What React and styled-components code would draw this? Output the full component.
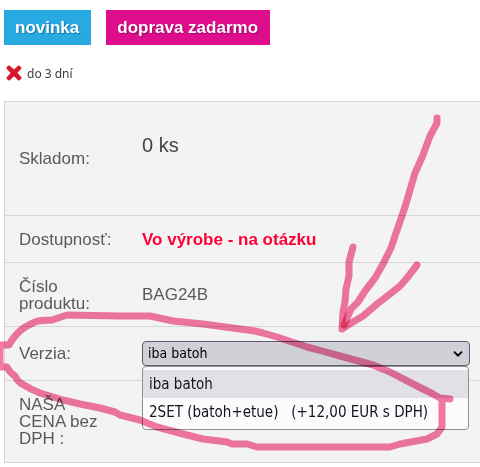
import React, { useState } from "react";
import styled, { createGlobalStyle } from "styled-components";

const versions = ["iba batoh", "2SET (batoh+etue)\u00a0\u00a0 (+12,00 EUR s DPH)"];

export default function App() {
  const [version, setVersion] = useState(versions[0]);
  return (
    <Page>
      <GlobalStyle />
      <Badges>
        <Badge color="#28a9e2">novinka</Badge>
        <Badge color="#de0d8b">doprava zadarmo</Badge>
      </Badges>
      <Delivery>
        <CrossIcon />
        do 3 dní
      </Delivery>
      <Table>
        <tbody>
          <tr>
            <Label height="114px">Skladom:</Label>
            <Value>
              <Stock>0 ks</Stock>
            </Value>
          </tr>
          <tr>
            <Label height="47px">Dostupnosť:</Label>
            <Value>
              <Availability>Vo výrobe - na otázku</Availability>
            </Value>
          </tr>
          <tr>
            <Label height="64px">Číslo produktu:</Label>
            <Value>BAG24B</Value>
          </tr>
          <tr>
            <Label height="54px">
              <label htmlFor="version">Verzia:</label>
            </Label>
            <Value>
              <SelectBox>
                <Select
                  id="version"
                  value={version}
                  onChange={(e) => setVersion(e.target.value)}
                >
                  {versions.map((v) => (
                    <option key={v}>{v}</option>
                  ))}
                </Select>
                <Chevron viewBox="0 0 10 6" aria-hidden="true">
                  <path d="M1 .7l4 4 4-4" />
                </Chevron>
                <Options role="listbox" aria-label="Verzia">
                  {versions.map((v) => (
                    <Option
                      key={v}
                      role="option"
                      aria-selected={v === version}
                      onClick={() => setVersion(v)}
                    >
                      {v}
                    </Option>
                  ))}
                </Options>
              </SelectBox>
            </Value>
          </tr>
          <tr>
            <Label height="82px">NAŠA CENA bez DPH :</Label>
            <Value />
          </tr>
        </tbody>
      </Table>
      <Marker />
    </Page>
  );
}

const CrossIcon = () => (
  <Cross viewBox="0 0 16 16" aria-hidden="true">
    <path d="M3.2 .3L8 4.6 12.6 .3Q14.5 .8 15.7 3.2L11.4 7.8 15.8 12.8Q14.8 15 12.6 15.7L8 11.3 3.4 15.7Q1 15 .3 12.8L4.6 7.9 .2 3.3Q1 1 3.2 .3Z" />
  </Cross>
);

// hand drawn arrow and loop around the version row
const Marker = () => (
  <MarkerSvg width="480" height="467" viewBox="0 0 480 467" aria-hidden="true">
    <path d="M437 118L437 123 430 136 423 155 415 173 410 190 405 207 395 236 391 248 383 264 375 278 365 291 358 302 351 309 344 325" />
    <path d="M353 247L349 262 349 276 346 289 345 302 343 312 342 329 348 325 363 316 377 304 390 294 400 286 407 278 417 265" />
    <path d="M450 399L440 398 433 394 417 386 390 372 373 365 340 356 322 351 307 347 277 337 263 333 255 331 240 329 203 324 173 321 150 316 120 316 67 315 52 320 Q40 320 35 322 Q24 327 20 331 Q14 336 9 345L0 345 0 367 7 367Q10 373 15 376Q18 382 22 384Q30 389 40 393L63 400 80 404 100 408 115 412 120 415 140 420 157 427 187 435 203 439 227 442 232 444 247 444 257 447 390 447 400 444 427 439 437 434 442 427 442 402" />
  </MarkerSvg>
);

const GlobalStyle = createGlobalStyle`
  * {
    box-sizing: border-box;
  }
  body {
    margin: 0;
    background-color: #ffffff;
  }
`;
const Page = styled.main`
  position: relative;
  overflow: hidden;
  padding: 10px 0px 4px 4px;
  font-family: "Liberation Sans", Arial, sans-serif;
  font-size: 17px;
  line-height: 17px;
  color: #5a5a5a;
`;
const Badges = styled.div`
  display: flex;
  gap: 15px;
`;
const Badge = styled.span`
  padding: 9px 12px 9px 11px;
  font-weight: 700;
  color: #ffffff;
  text-shadow: 1px 1px 1px rgba(0, 0, 0, 0.3);
  background-color: ${(props) => props.color};
`;
const Delivery = styled.div`
  display: flex;
  align-items: center;
  gap: 5px;
  height: 56px;
  padding: 0px 0px 0px 2px;
  font-family: "Noto Sans", sans-serif;
  font-size: 12px;
  color: #3c3c3c;
`;
const Cross = styled.svg`
  width: 16px;
  height: 16px;
  fill: #d9152c;
`;
const Table = styled.table`
  width: 100%;
  border-collapse: separate;
  border-spacing: 0;
  border-top: 1px solid #d6d6d6;
  border-left: 1px solid #d6d6d6;
  background-color: #f3f3f3;
`;
const Label = styled.th.attrs({ scope: "row" })`
  width: 137px;
  height: ${(props) => props.height};
  padding: 0px 27px 0px 14px;
  border-bottom: 1px solid #d6d6d6;
  font-weight: 400;
  text-align: left;
`;
const Value = styled.td`
  padding: 0px 10px 0px 0px;
  border-bottom: 1px solid #d6d6d6;
`;
const Stock = styled.div`
  padding: 0px 0px 27px 0px;
  font-size: 20px;
  color: #444444;
`;
const Availability = styled.strong`
  color: #ff0033;
`;
const SelectBox = styled.div`
  position: relative;
  font-family: "DejaVu Sans Condensed", Tahoma, sans-serif;
  font-size: 14px;
`;
const Select = styled.select`
  display: block;
  appearance: none;
  width: 100%;
  height: 25px;
  padding: 0px 24px 0px 5px;
  border: 1px solid #5f5f70;
  border-radius: 4px;
  font: inherit;
  color: #000000;
  background-color: #d0d0d7;
`;
const Chevron = styled.svg`
  position: absolute;
  top: 10px;
  right: 7px;
  width: 10px;
  height: 6px;
  fill: none;
  stroke: #000000;
  stroke-width: 1.8;
  pointer-events: none;
`;
const Options = styled.ul`
  position: absolute;
  top: 100%;
  left: 0;
  right: 1px;
  margin: 0;
  padding: 3px 0px;
  border: 1px solid #8f8f98;
  border-radius: 4px;
  list-style: none;
  font-size: 15px;
  color: #15141a;
  background-color: #fbfbfe;
`;
const Option = styled.li`
  padding: 0px 6px;
  line-height: 28px;
  white-space: nowrap;
  background-color: ${(props) => (props["aria-selected"] ? "#e0e0e6" : "transparent")};
`;
const MarkerSvg = styled.svg`
  position: absolute;
  top: 0;
  left: 0;
  mix-blend-mode: multiply;
  pointer-events: none;
  path {
    fill: none;
    stroke: #f579a4;
    stroke-width: 7;
    stroke-linecap: round;
    stroke-linejoin: round;
    mix-blend-mode: multiply;
  }
`;
